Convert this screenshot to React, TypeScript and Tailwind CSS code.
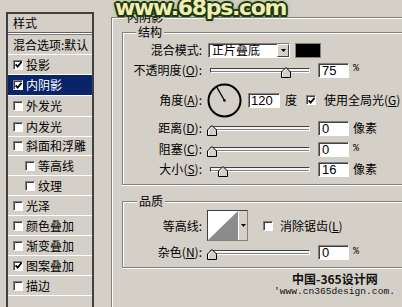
import React from "react";

function Check({ checked }: { checked?: boolean }) {
  return (
    <span className="w-[10px] h-[10px] shrink-0 bg-white border border-t-[#808080] border-l-[#808080] border-b-[#ffffff] border-r-[#ffffff] shadow-[inset_1px_1px_0_#404040] flex items-center justify-center">
      {checked && (
        <svg width="7" height="7" viewBox="0 0 7 7">
          <path d="M0.6 3.4 L2.6 5.6 L6.6 0.8" fill="none" stroke="#000" strokeWidth="1.7" />
        </svg>
      )}
    </span>
  );
}

function Field({ value }: { value: string }) {
  return (
    <div className="w-[31px] h-[15px] shrink-0 bg-white border border-t-[#808080] border-l-[#808080] border-b-[#ffffff] border-r-[#ffffff] shadow-[inset_1px_1px_0_#404040] pl-[3px] flex items-center font-['Liberation_Sans',sans-serif] text-[13px] leading-[13px]">
      {value}
    </div>
  );
}

function Slider({ pos }: { pos: number }) {
  return (
    <div className="relative w-[100px] h-[5px] shrink-0 border border-t-[#404040] border-l-[#404040] border-b-[#ffffff] border-r-[#ffffff] bg-[#f4f4f4] shadow-[inset_0_-1px_0_#808080]">
      <svg className="absolute top-[-2px]" style={{ left: pos - 5 }} width="10" height="11" viewBox="0 0 10 11">
        <polygon points="5,0.5 9.5,5 9.5,10.5 0.5,10.5 0.5,5" fill="#d4d0c8" stroke="#000" strokeWidth="1" />
        <polyline points="1.5,9.5 1.5,5.4 5,1.9" fill="none" stroke="#fff" strokeWidth="1" />
      </svg>
    </div>
  );
}

function Label({ children }: { children: React.ReactNode }) {
  return <div className="w-[79px] shrink-0 text-right whitespace-nowrap">{children}</div>;
}

function Mn({ c }: { c: string }) {
  return (
    <span>
      (<span className="underline underline-offset-[1px]">{c}</span>):
    </span>
  );
}

const items: { label: string; checked?: boolean; h: string; selected?: boolean; indent?: boolean }[] = [
  { label: "投影", checked: true, h: "h-[20px]" },
  { label: "内阴影", checked: true, h: "h-[21px]", selected: true },
  { label: "外发光", h: "h-[21px]" },
  { label: "内发光", h: "h-[20px]" },
  { label: "斜面和浮雕", h: "h-[19px]" },
  { label: "等高线", h: "h-[20px]", indent: true },
  { label: "纹理", h: "h-[20px]", indent: true },
  { label: "光泽", h: "h-[20px]" },
  { label: "颜色叠加", h: "h-[20px]" },
  { label: "渐变叠加", h: "h-[20px]" },
  { label: "图案叠加", checked: true, h: "h-[20px]" },
  { label: "描边", h: "h-[20px]" },
];

export default function App() {
  return (
    <div className="relative w-[402px] h-[307px] overflow-hidden bg-[#d4d0c8] flex items-start text-black text-[12px] leading-[12px] font-['Noto_Sans_CJK_SC',sans-serif]">
      {/* Left styles list */}
      <div className="ml-[6px] mt-[12px] w-[88px] h-[310px] shrink-0 border-2 border-[#404040] flex flex-col">
        <div className="h-[18px] pl-[5px] flex items-center">样式</div>
        <div className="h-[3px] bg-[#ffffff] border-t border-b border-t-[#606060] border-b-[#808080]" />
        <div className="h-[20px] pl-[5px] flex items-center border-b border-[#ffffff] whitespace-nowrap">混合选项:默认</div>
        {items.map((it) => (
          <div
            key={it.label}
            className={`${it.h} flex items-center gap-[3px] border-b border-[#ffffff] whitespace-nowrap ${it.indent ? "pl-[17px]" : "pl-[5px]"} ${it.selected ? "bg-[#0a246a] text-white" : ""}`}
          >
            <Check checked={it.checked} />
            <span>{it.label}</span>
          </div>
        ))}
      </div>

      {/* Right: outer group box 内阴影 */}
      <div className="relative ml-[17px] mt-[17px] flex-1 h-[300px] border-t border-l border-[#808080] shadow-[inset_1px_1px_0_#ffffff] pl-[10px] pt-[14px]">
        <span className="absolute left-[13px] top-[-7px] px-[2px] bg-[#d4d0c8]">内阴影</span>

        {/* 结构 */}
        <div className="relative w-[300px] h-[153px] border-t border-l border-b border-[#808080] shadow-[inset_1px_1px_0_#ffffff,0_1px_0_#ffffff] pt-[8px] flex flex-col">
          <span className="absolute left-[13px] top-[-7px] px-[2px] bg-[#d4d0c8]">结构</span>

          <div className="h-[18px] flex items-center">
            <Label>混合模式:</Label>
            <div className="ml-[6px] w-[82px] h-[15px] bg-white border border-t-[#808080] border-l-[#808080] border-b-[#ffffff] border-r-[#ffffff] shadow-[inset_1px_1px_0_#404040] flex items-center">
              <span className="flex-1 pl-[3px] whitespace-nowrap">正片叠底</span>
              <span className="w-[12px] h-[13px] bg-[#d4d0c8] border border-t-[#ffffff] border-l-[#ffffff] border-b-[#404040] border-r-[#404040] flex items-center justify-center">
                <svg width="5" height="3" viewBox="0 0 5 3">
                  <polygon points="0,0 5,0 2.5,3" fill="#000" />
                </svg>
              </span>
            </div>
            <div className="ml-[5px] w-[26px] h-[15px] bg-black border border-[#808080]" />
          </div>

          <div className="h-[22px] flex items-center">
            <Label>
              不透明度<Mn c="O" />
            </Label>
            <div className="ml-[8px]">
              <Slider pos={75} />
            </div>
            <div className="ml-[8px]">
              <Field value="75" />
            </div>
            <span className="ml-[4px] self-start mt-[4px] font-['Liberation_Mono',monospace] text-[10px]">%</span>
          </div>

          <div className="h-[38px] flex items-center">
            <Label>
              角度<Mn c="A" />
            </Label>
            <svg className="ml-[5px] shrink-0" width="35" height="35" viewBox="0 0 35 35">
              <circle cx="17.5" cy="17.5" r="16" fill="none" stroke="#000" strokeWidth="2" />
              <line x1="17.5" y1="17.5" x2="9.5" y2="3.6" stroke="#000" strokeWidth="1.3" />
              <circle cx="17.5" cy="17.5" r="1.3" fill="#000" />
            </svg>
            <div className="ml-[6px]">
              <div className="w-[32px] h-[15px] bg-white border border-t-[#808080] border-l-[#808080] border-b-[#ffffff] border-r-[#ffffff] shadow-[inset_1px_1px_0_#404040] pl-[2px] flex items-center font-['Liberation_Sans',sans-serif] text-[13px] leading-[13px]">
                120
              </div>
            </div>
            <span className="ml-[5px]">度</span>
            <span className="ml-[9px]">
              <Check checked />
            </span>
            <span className="ml-[8px] whitespace-nowrap">
              使用全局光(<span className="underline underline-offset-[1px]">G</span>)
            </span>
          </div>

          <div className="h-[18px] flex items-center">
            <Label>
              距离<Mn c="D" />
            </Label>
            <div className="ml-[8px]">
              <Slider pos={1} />
            </div>
            <div className="ml-[8px]">
              <Field value="0" />
            </div>
            <span className="ml-[4px]">像素</span>
          </div>

          <div className="h-[24px] flex items-center">
            <Label>
              阻塞<Mn c="C" />
            </Label>
            <div className="ml-[8px]">
              <Slider pos={1} />
            </div>
            <div className="ml-[8px]">
              <Field value="0" />
            </div>
            <span className="ml-[4px] self-start mt-[6px] font-['Liberation_Mono',monospace] text-[10px]">%</span>
          </div>

          <div className="h-[16px] flex items-center">
            <Label>
              大小<Mn c="S" />
            </Label>
            <div className="ml-[8px]">
              <Slider pos={12} />
            </div>
            <div className="ml-[8px]">
              <Field value="16" />
            </div>
            <span className="ml-[4px]">像素</span>
          </div>
        </div>

        {/* 品质 */}
        <div className="relative mt-[16px] w-[300px] h-[67px] border-t border-l border-b border-[#808080] shadow-[inset_1px_1px_0_#ffffff,0_1px_0_#ffffff] pt-[8px] flex flex-col">
          <span className="absolute left-[14px] top-[-7px] px-[2px] bg-[#d4d0c8]">品质</span>

          <div className="h-[31px] flex items-center">
            <Label>等高线:</Label>
            <div className="ml-[5px] w-[41px] h-[31px] flex border border-t-[#404040] border-l-[#404040] border-b-[#808080] border-r-[#808080] bg-white">
              <svg width="30" height="29" viewBox="0 0 30 29" className="shrink-0">
                <rect x="0" y="0" width="30" height="29" fill="#ffffff" />
                <polygon points="0,29 30,0 30,29" fill="#8c8c8c" />
              </svg>
              <span className="w-[9px] h-[29px] bg-[#d4d0c8] border-l border-[#ffffff] flex items-center justify-center">
                <svg width="5" height="3" viewBox="0 0 5 3">
                  <polygon points="0,0 5,0 2.5,3" fill="#000" />
                </svg>
              </span>
            </div>
            <span className="ml-[15px]">
              <Check />
            </span>
            <span className="ml-[7px] whitespace-nowrap">
              消除锯齿(<span className="underline underline-offset-[1px]">L</span>)
            </span>
          </div>

          <div className="h-[22px] flex items-center">
            <Label>
              杂色<Mn c="N" />
            </Label>
            <div className="ml-[8px]">
              <Slider pos={1} />
            </div>
            <div className="ml-[8px]">
              <Field value="0" />
            </div>
            <span className="ml-[4px] self-start mt-[5px] font-['Liberation_Mono',monospace] text-[10px]">%</span>
          </div>
        </div>
      </div>

      {/* Watermarks */}
      <div className="absolute left-[115px] top-[-4px] font-['DejaVu_Sans',sans-serif] font-bold text-[22px] leading-[24px] tracking-[-1.3px] text-[#f0eeb4] whitespace-nowrap [text-shadow:2px_0_0_#1d3a0e,-2px_0_0_#1d3a0e,0_2px_0_#1d3a0e,0_-2px_0_#1d3a0e,1.5px_1.5px_0_#1d3a0e,-1.5px_-1.5px_0_#1d3a0e,1.5px_-1.5px_0_#1d3a0e,-1.5px_1.5px_0_#1d3a0e,0_0_5px_#4f7a22]">
        www.68ps.com
      </div>
      <div className="absolute left-[292px] top-[273px] text-[12px] leading-[12px] font-bold whitespace-nowrap text-[#111]">
        中国-365设计网
      </div>
      <div className="absolute left-[274px] top-[287px] font-['Liberation_Mono',monospace] text-[9.6px] leading-[10px] whitespace-nowrap text-[#111]">
        'www.cn365design.com.
      </div>
    </div>
  );
}
